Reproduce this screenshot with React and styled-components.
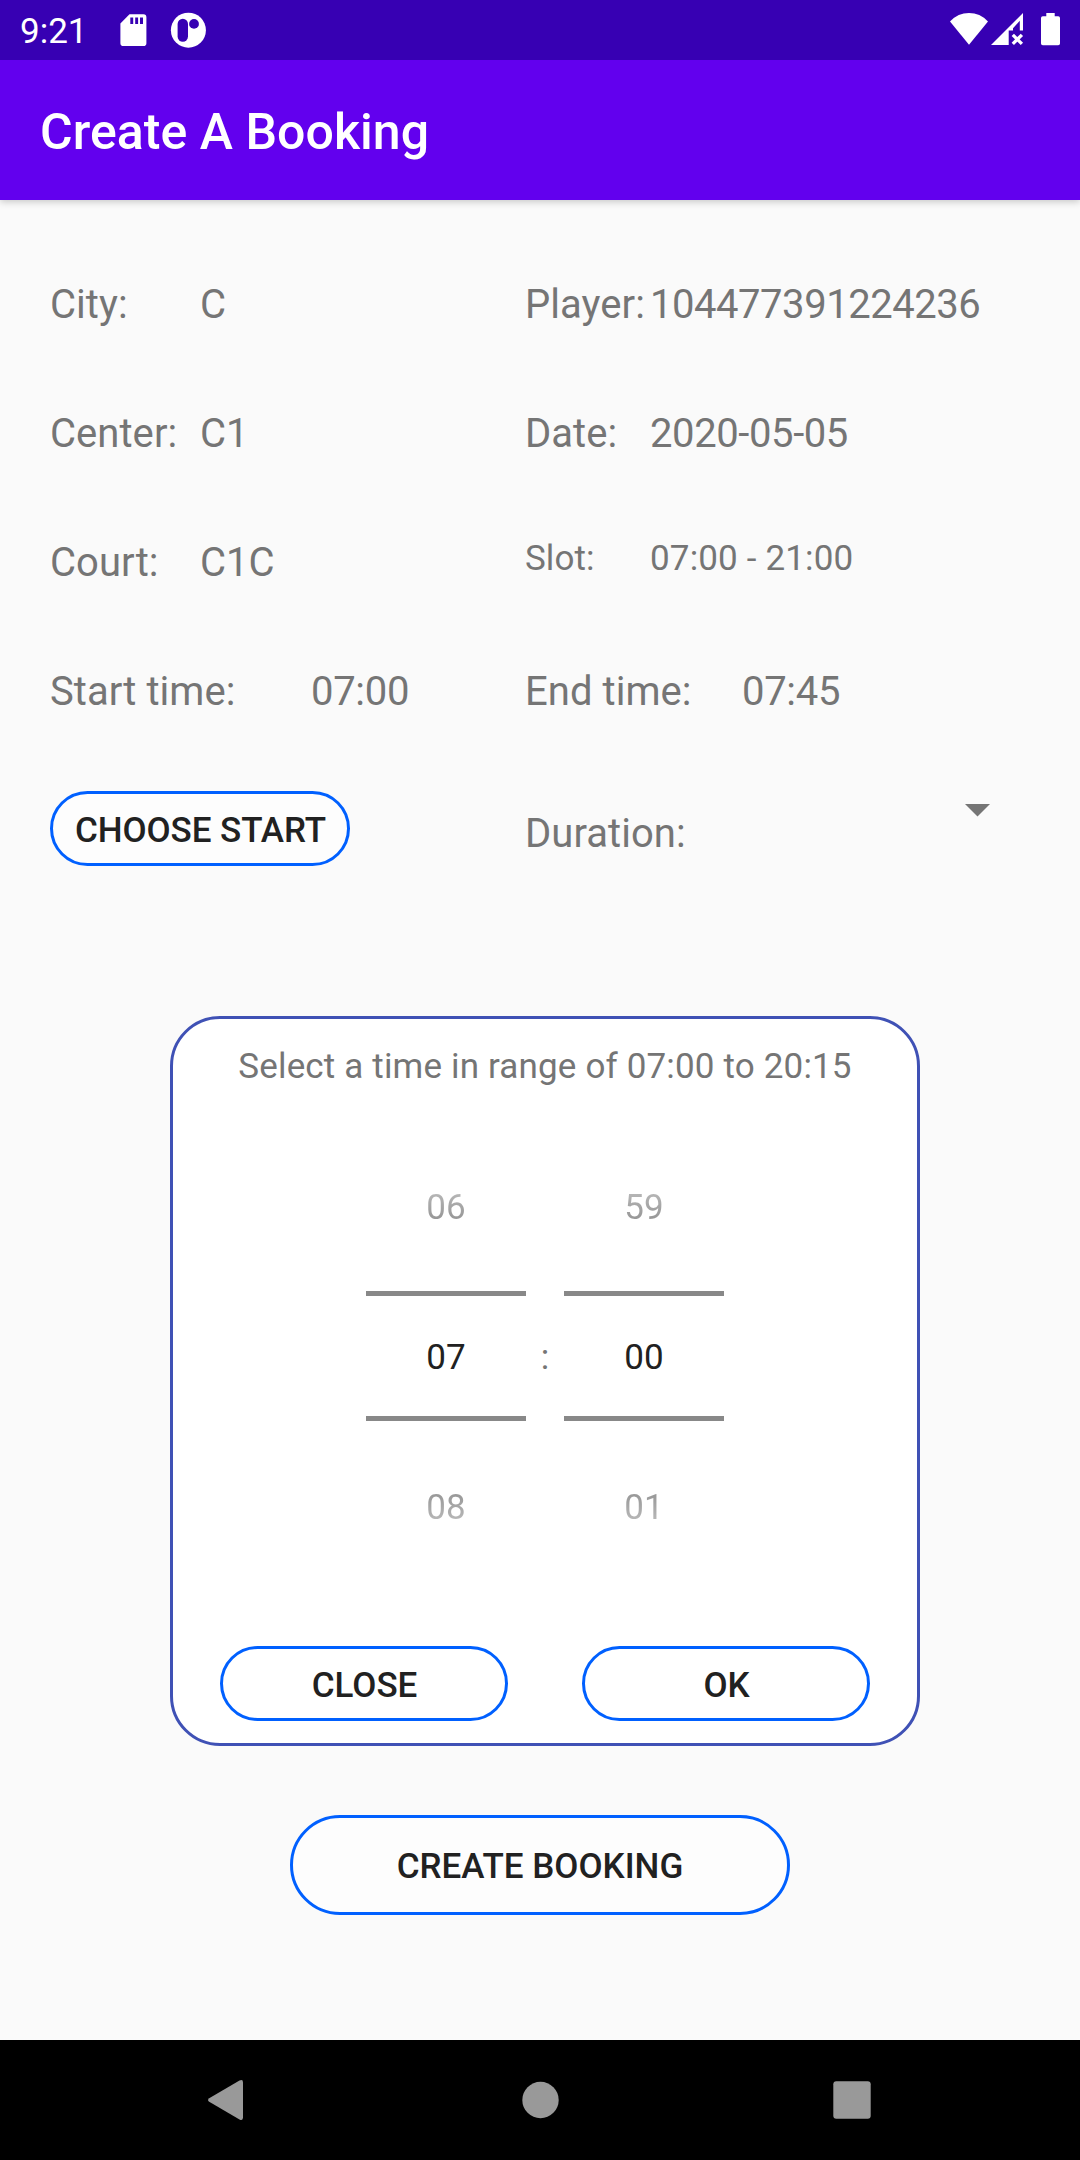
import React from "react";
import styled, { createGlobalStyle } from "styled-components";

const GlobalStyle = createGlobalStyle`
  * { box-sizing: border-box; }
  body { margin: 0; background: #fafafa; }
`;

const Screen = styled.div`
  width: 1080px;
  height: 2160px;
  display: flex;
  flex-direction: column;
  overflow: hidden;
  background: #fafafa;
  font-family: Roboto, "Liberation Sans", sans-serif;
  color: #757575;
`;

const StatusBar = styled.header`
  flex: none;
  height: 60px;
  display: flex;
  align-items: center;
  background: #3700b3;
  color: #fff;
  padding: 0 20px;
  z-index: 2;

  svg { display: block; flex: none; }
`;

const Clock = styled.span`
  width: 98px;
  padding-top: 3px;
  font-size: 35px;
  line-height: 41px;
`;

const NoticeIcons = styled.div`
  display: flex;
  gap: 20px;
`;

const SystemIcons = styled.div`
  display: flex;
  margin-left: auto;
`;

const AppBar = styled.div`
  flex: none;
  height: 140px;
  display: flex;
  align-items: center;
  padding: 4px 40px 0;
  background: #6200ee;
  box-shadow: 0 2px 7px rgba(0, 0, 0, 0.2);
  z-index: 1;
`;

const Title = styled.h1`
  margin: 0;
  color: #fff;
  font-size: 50px;
  line-height: 60px;
  font-weight: 500;
  letter-spacing: 0.05px;
`;

const Content = styled.main`
  flex: 1;
  display: flex;
  flex-direction: column;
  padding: 81px 0 0;
`;

const Details = styled.section`
  display: grid;
  grid-template-columns: 475px 1fr;
  grid-template-rows: repeat(4, 129px) 138px;
  padding-left: 50px;
`;

const Field = styled.div`
  display: flex;
  align-items: flex-start;
  font-size: ${(p) => (p.$small ? 35 : 40)}px;
  line-height: ${(p) => (p.$small ? 39 : 47)}px;
  padding-top: ${(p) => p.$top || 0}px;
  white-space: nowrap;
`;

const Label = styled.span`
  flex: none;
  width: ${(p) => p.$width}px;
  letter-spacing: 0.05px;
`;

const Value = styled.span`
  letter-spacing: ${(p) => p.$tracking || 0}px;
`;

const SpinnerArrow = styled.svg`
  display: block;
  margin: 7px 0 0 auto;
`;

const SpinnerField = styled.div`
  display: flex;
  align-items: flex-start;
  padding-right: 90px;
`;

const Button = styled.button`
  width: ${(p) => p.$width}px;
  height: ${(p) => (p.$large ? 100 : 75)}px;
  margin: 0;
  padding: ${(p) => (p.$large ? "3px 0 0" : "4px 0 0 1px")};
  border: 3px solid #0060ff;
  border-radius: 50px;
  background: ${(p) => (p.$onCard ? "#fff" : "#fdfdfd")};
  color: #212121;
  font: 500 35px/41px Roboto, "Liberation Sans", sans-serif;
  letter-spacing: ${(p) => p.$tracking || 0}px;
  white-space: nowrap;
`;

const ActionCell = styled.div`
  margin-top: -6px;
`;

const Card = styled.section`
  width: 750px;
  height: 730px;
  margin: 81px 0 69px 170px;
  display: flex;
  flex-direction: column;
  align-items: center;
  background: #fff;
  border: 3px solid #3f51b5;
  border-radius: 50px;
  padding-top: 27px;
`;

const Prompt = styled.p`
  margin: 0;
  font-size: 35px;
  line-height: 41px;
  letter-spacing: 0.16px;
  white-space: nowrap;
`;

const TimePicker = styled.div`
  display: flex;
  align-items: center;
  height: 450px;
  margin-top: 44px;
  font-size: 35px;
  line-height: 41px;
`;

const Separator = styled.span`
  width: 38px;
  padding-top: 3px;
  text-align: center;
`;

const Wheel = styled.div`
  width: 160px;
  display: flex;
  flex-direction: column;
  align-items: center;
`;

const Faded = styled.span`
  height: 150px;
  padding-top: 3px;
  display: flex;
  align-items: center;
  color: transparent;
  background: linear-gradient(
    ${(p) => (p.$above ? "to bottom" : "to top")},
    #cbcbcb 30%,
    #828282 70%
  );
  background-clip: text;
  -webkit-background-clip: text;
`;

const Selected = styled.span`
  width: 160px;
  height: 130px;
  margin: 10px 0;
  padding-top: 3px;
  display: flex;
  align-items: center;
  justify-content: center;
  color: #212121;
  border: solid #888;
  border-width: 5px 0;
`;

const CardActions = styled.div`
  display: flex;
  gap: 74px;
  margin-top: 65px;
`;

const Footer = styled.div`
  display: flex;
  justify-content: center;
`;

const NavBar = styled.nav`
  flex: none;
  height: 120px;
  display: flex;
  align-items: center;
  justify-content: space-between;
  padding: 0 204px 0 201px;
  background: #000;

  svg { display: block; }
`;

const ROWS = [
  [
    { label: "City:", value: "C" },
    { label: "Player:", value: "104477391224236", tracking: -0.46 },
  ],
  [
    { label: "Center:", value: "C1" },
    { label: "Date:", value: "2020-05-05", tracking: -0.4 },
  ],
  [
    { label: "Court:", value: "C1C" },
    { label: "Slot:", value: "07:00 - 21:00", tracking: 0.15, small: true },
  ],
];

function TimeWheel({ before, value, after }) {
  return (
    <Wheel>
      <Faded $above>{before}</Faded>
      <Selected>{value}</Selected>
      <Faded>{after}</Faded>
    </Wheel>
  );
}

export default function App() {
  return (
    <Screen>
      <GlobalStyle />
      <StatusBar>
        <Clock>9:21</Clock>
        <NoticeIcons>
          <svg width="32" height="36" viewBox="118 12 32 36" fill="#fff">
            <path
              fillRule="evenodd"
              d="M129.5 14.3H143.5Q146.4 14.3 146.4 17.2V43.2Q146.4 46 143.5 46H123.3Q120.4 46 120.4 43.2V23.6ZM130.3 17.5V24H133.2V17.5ZM135.2 17.5V24H138.1V17.5ZM140 17.5V24H143V17.5Z"
            />
          </svg>
          <svg width="38" height="36" viewBox="170 12.1 38 36">
            <circle cx="188.4" cy="30.3" r="17.5" fill="#fff" />
            <rect x="177.6" y="18.9" width="10.4" height="23" rx="5.2" fill="#3700b3" />
            <circle cx="194" cy="24" r="4.9" fill="#3700b3" />
          </svg>
        </NoticeIcons>
        <SystemIcons>
          <svg width="41" height="36" viewBox="950 12 41 36" fill="#fff">
            <path d="M969 44.8L950 21.4Q958 13 969 13T988 21.4Z" />
          </svg>
          <svg width="50" height="36" viewBox="991 12 50 36" fill="#fff">
            <path d="M1023 13V30.6H1019.8V20.8L1013 28.3V30.6H1008.7V45H991Z" />
            <path d="M1012.8 34.8L1021.9 43.9M1021.9 34.8L1012.8 43.9" stroke="#fff" strokeWidth="3.3" />
          </svg>
          <svg width="19" height="36" viewBox="1041 12 19 36" fill="#fff">
            <path d="M1046.3 13H1054.7V16.2H1058.2Q1060 16.2 1060 18V43.5Q1060 45.3 1058.2 45.3H1042.8Q1041 45.3 1041 43.5V18Q1041 16.2 1042.8 16.2H1046.3Z" />
          </svg>
        </SystemIcons>
      </StatusBar>

      <AppBar>
        <Title>Create A Booking</Title>
      </AppBar>

      <Content>
        <Details>
          {ROWS.flat().map((item, i) => (
            <Field key={item.label} $small={item.small}>
              <Label $width={i % 2 ? 125 : 150}>{item.label}</Label>
              <Value $tracking={item.tracking}>{item.value}</Value>
            </Field>
          ))}
          <Field>
            <Label $width={261}>Start time:</Label>
            <Value $tracking={-0.3}>07:00</Value>
          </Field>
          <Field>
            <Label $width={217}>End time:</Label>
            <Value $tracking={-0.3}>07:45</Value>
          </Field>
          <ActionCell>
            <Button $width={300} $tracking={-0.08}>CHOOSE START</Button>
          </ActionCell>
          <SpinnerField>
            <Field $top={13}>
              <Label $width={180}>Duration:</Label>
            </Field>
            <SpinnerArrow width="25" height="13" viewBox="0 0 25 13" fill="#757575">
              <path d="M0 0H25L12.5 12.5Z" />
            </SpinnerArrow>
          </SpinnerField>
        </Details>

        <Card>
          <Prompt>Select a time in range of 07:00 to 20:15</Prompt>
          <TimePicker>
            <TimeWheel before="06" value="07" after="08" />
            <Separator>:</Separator>
            <TimeWheel before="59" value="00" after="01" />
          </TimePicker>
          <CardActions>
            <Button $width={288} $onCard>CLOSE</Button>
            <Button $width={288} $onCard>OK</Button>
          </CardActions>
        </Card>

        <Footer>
          <Button $width={500} $large>CREATE BOOKING</Button>
        </Footer>
      </Content>

      <NavBar>
        <svg width="48" height="48" viewBox="201 2076 48 48" fill="#999">
          <path d="M209.2 2098.2L239.5 2080.6Q243 2079 243 2082.4V2117.6Q243 2121 239.5 2119.4L209.2 2101.8Q206.9 2100 209.2 2098.2Z" />
        </svg>
        <svg width="48" height="48" viewBox="0 0 48 48" fill="#999">
          <circle cx="25.5" cy="24" r="18.2" />
        </svg>
        <svg width="48" height="48" viewBox="0 0 48 48" fill="#999">
          <rect x="5.3" y="5.3" width="37.4" height="37.4" rx="3" />
        </svg>
      </NavBar>
    </Screen>
  );
}
